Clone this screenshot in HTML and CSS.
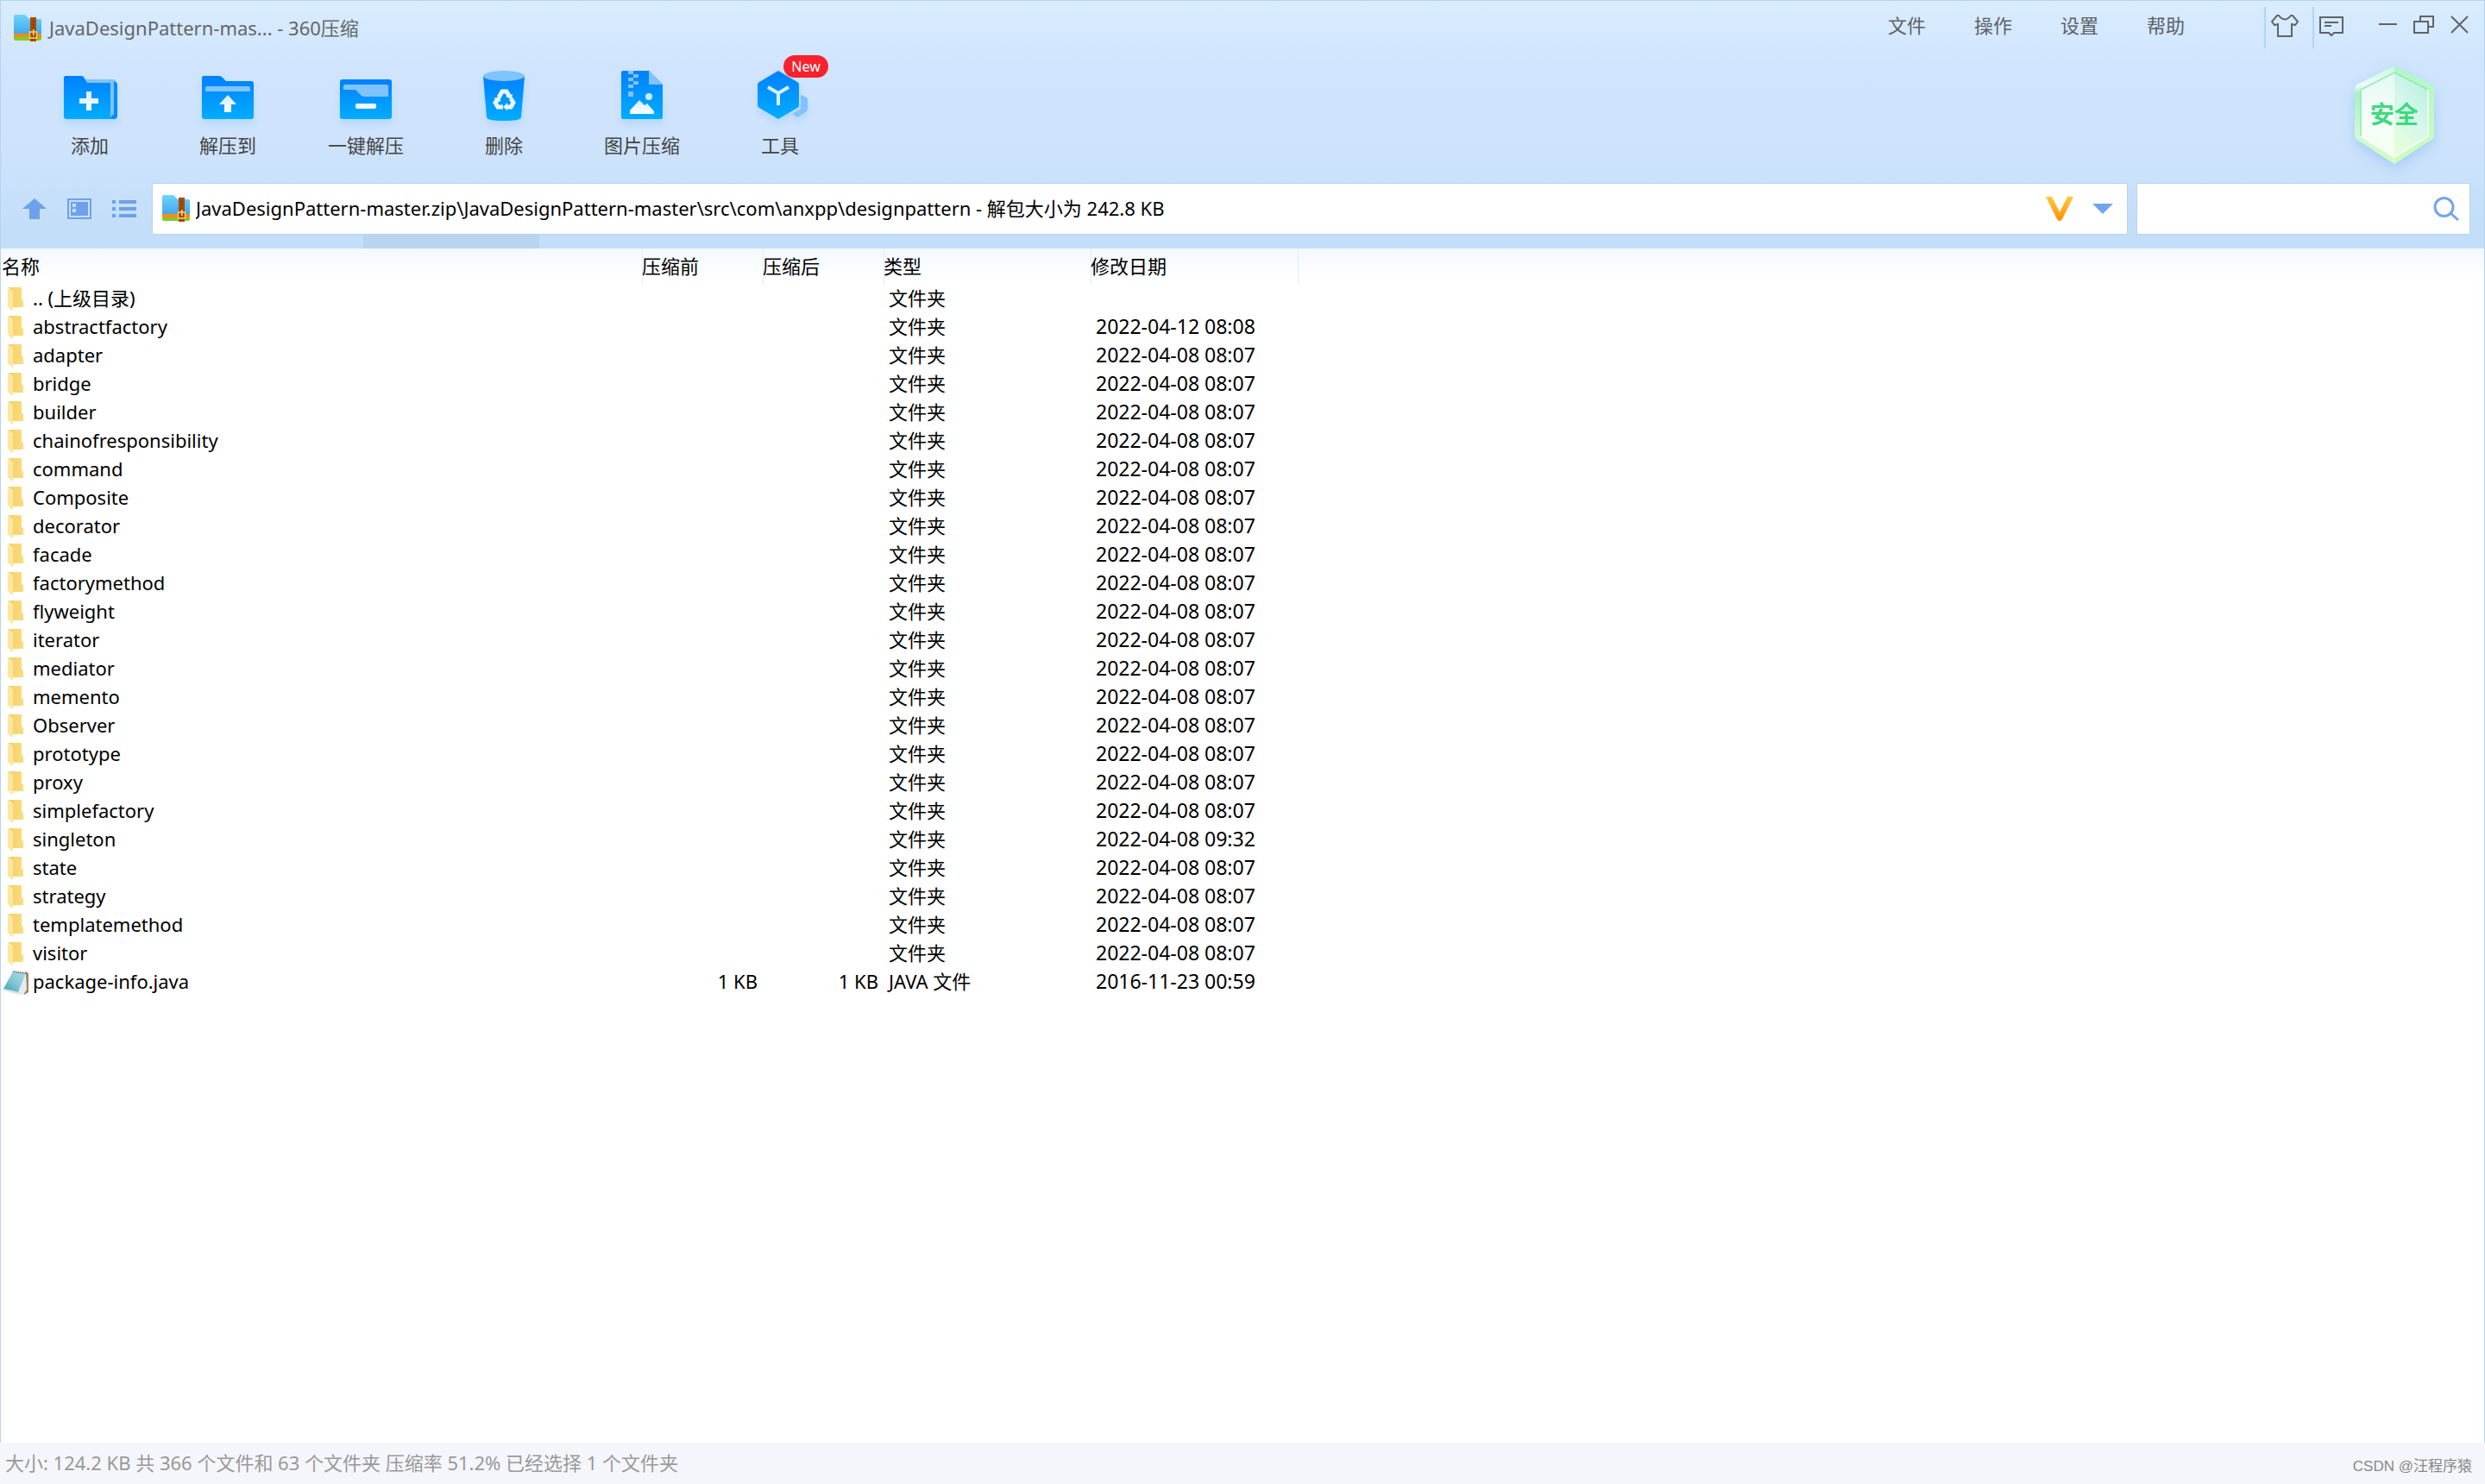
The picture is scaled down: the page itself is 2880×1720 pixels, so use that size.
FILE: index.html
```html
<!DOCTYPE html>
<html lang="zh-CN">
<head>
<meta charset="utf-8">
<title>JavaDesignPattern-mas... - 360压缩</title>
<link rel="stylesheet" href="styles.css">
</head>
<body>
<svg class="defs" aria-hidden="true">
  <defs>
    <linearGradient id="blue" x1="0" y1="0" x2="0" y2="1"><stop offset="0" stop-color="#0080ff"/><stop offset="1" stop-color="#00adff"/></linearGradient>
    <linearGradient id="sky" x1="0" y1="0" x2="0" y2="1"><stop offset="0" stop-color="#6fd3fb"/><stop offset="1" stop-color="#3da2ea"/></linearGradient>
    <linearGradient id="white" x1="0" y1="0" x2="0" y2="1"><stop offset="0" stop-color="#d3ecff"/><stop offset="1" stop-color="#ffffff"/></linearGradient>
    <linearGradient id="gold" x1="0" y1="0" x2="0" y2="1"><stop offset="0" stop-color="#ffc83d"/><stop offset="1" stop-color="#ff9000"/></linearGradient>
    <linearGradient id="page" x1="0" y1="0" x2="1" y2="0"><stop offset="0" stop-color="#f2d069"/><stop offset="1" stop-color="#fbdc7d"/></linearGradient>
    <linearGradient id="note" x1="1" y1="0" x2="0" y2="1"><stop offset="0" stop-color="#a9dbe3"/><stop offset="0.5" stop-color="#86c9d6"/><stop offset="1" stop-color="#3f9fb8"/></linearGradient>
    <linearGradient id="rimLeft" x1="0" y1="0" x2="0" y2="1"><stop offset="0" stop-color="#c4f7dc"/><stop offset="0.2" stop-color="#effdf8"/><stop offset="0.28" stop-color="#a9f0c4"/><stop offset="0.7" stop-color="#cdfbd3"/><stop offset="1" stop-color="#d0ffc0"/></linearGradient>
    <linearGradient id="rimRight" x1="0" y1="0" x2="0" y2="1"><stop offset="0" stop-color="#aef7ca"/><stop offset="1" stop-color="#ccffbc"/></linearGradient>
    <linearGradient id="coreLeft" x1="0" y1="0" x2="0" y2="1"><stop offset="0" stop-color="#e2f9f1"/><stop offset="0.5" stop-color="#f6fdfa"/><stop offset="1" stop-color="#f3fff0"/></linearGradient>
    <linearGradient id="coreRight" x1="0.8" y1="0" x2="0.3" y2="1"><stop offset="0" stop-color="#b5f0dc"/><stop offset="0.5" stop-color="#d6f7ec"/><stop offset="1" stop-color="#e3ffd8"/></linearGradient>
    <symbol id="archive" viewBox="0 0 32 32">
      <path d="M0 2q0-2 2-2h10q2 0 3 2l3 3h12q2 0 2 2v18H0z" fill="url(#sky)"/>
      <path d="M0 22h32v4H0z" fill="#ff8a12"/>
      <path d="M0 26h32v2q0 2-2 2H2q-2 0-2-2z" fill="#7fcb2d"/>
      <path d="M19 3h7v28h-7z" fill="#a64c05"/>
      <path d="M22 7h1v2h-1zM22 11h1v2h-1zM22 15h1v2h-1z" fill="#6b2c00"/>
      <path d="M18.500 20h8v7h-8z" fill="#a64c05" stroke="#ffd768" stroke-width="1.300"/>
      <path d="M22 17h1.500v7H22z" fill="#ffe08a"/>
    </symbol>
    <symbol id="folder" viewBox="0 0 20 28">
      <path d="M0 0h16v14l2 1v8H6V5z" fill="url(#page)"/>
      <path d="M0 1l6 4v21l-1 1-5-5z" fill="#ffe69b"/>
    </symbol>
  </defs>
</svg>
<div class="window">
  <header class="top">
    <div class="titlebar">
      <svg class="app-icon" aria-hidden="true"><use href="#archive"/></svg>
      <h1 class="title">JavaDesignPattern-mas... - 360压缩</h1>
      <nav class="menu">
        <button type="button">文件</button>
        <button type="button">操作</button>
        <button type="button">设置</button>
        <button type="button">帮助</button>
      </nav>
      <div class="extras">
        <button type="button" aria-label="皮肤"><svg width="32" height="28" viewBox="0 0 32 28" fill="none" stroke="#606468" stroke-width="2"><path d="M9 2q7 9 14 0l2 0 6 7-3 4-4-1v14H8V12l-4 1-3-4 6-7z"/></svg></button>
        <button type="button" aria-label="反馈"><svg width="28" height="26" viewBox="0 0 28 26" fill="none" stroke="#606468" stroke-width="2"><path d="M1 3h26v18H17l-3 3-3-3H1zM6 9h16M6 13h8"/></svg></button>
      </div>
      <div class="controls">
        <button type="button" aria-label="最小化"><svg width="24" height="24" viewBox="0 0 24 24" stroke="#606468" stroke-width="2"><path d="M2 12h21"/></svg></button>
        <button type="button" aria-label="还原"><svg width="24" height="24" viewBox="0 0 24 24" fill="none" stroke="#606468" stroke-width="2"><path d="M1 9h16v13H1zM8 8V3h15v12h-5"/></svg></button>
        <button type="button" aria-label="关闭"><svg width="24" height="24" viewBox="0 0 24 24" stroke="#606468" stroke-width="2"><path d="M2 3l19 19M21 3L2 22"/></svg></button>
      </div>
    </div>
    <div class="toolbar">
      <button type="button" class="tool"><svg viewBox="0 0 64 64" aria-hidden="true">
        <path d="M24 12h35q3 0 3 3v40H50z" fill="#80c3ff"/><path d="M60 14q4 1 4 4v36q0 4-4 4h-6l6-6z" fill="#008cff"/>
        <path d="M2 10q0-2 2-2h18q3 0 4 3l3 5h27v38q0 4 4 4H5q-3 0-3-3z" fill="url(#blue)"/>
        <path d="M28 26h6v8h8v6h-8v8h-6v-8h-8v-6h8z" fill="url(#white)"/></svg><span>添加</span></button>
      <button type="button" class="tool"><svg viewBox="0 0 64 64" aria-hidden="true">
        <path d="M2 10q0-2 2-2h18q3 0 5 3l3 3h29q3 0 3 3v38q0 3-3 3H5q-3 0-3-3z" fill="url(#blue)"/>
        <path d="M6 22q0-2 2-2h48q2 0 2 2v4H6z" fill="#80c3ff"/>
        <path d="M32 30l10 11h-6v9h-8v-9h-6z" fill="url(#white)"/></svg><span>解压到</span></button>
      <button type="button" class="tool"><svg viewBox="0 0 64 64" aria-hidden="true">
        <rect x="2" y="12" width="60" height="46" rx="3" fill="url(#blue)"/>
        <path d="M6 20q0-2 2-2h48q2 0 2 2v12H30q-3 0-5-3l-5-5H6z" fill="#80c3ff"/>
        <rect x="20" y="40" width="24" height="6" rx="2" fill="#eef8ff"/></svg><span>一键解压</span></button>
      <button type="button" class="tool"><svg viewBox="0 0 64 64" aria-hidden="true">
        <path d="M8 8h48l-4 48q-1 4-20 4t-20-4z" fill="url(#blue)"/>
        <ellipse cx="32" cy="8" rx="24" ry="6" fill="#80c3ff"/>
        <g fill="none" stroke="#eaf7ff" stroke-width="5"><path d="M26 33l4-7h5l3 5"/><path d="M40 34l3 5-3 5h-5"/><path d="M31 44h-6l-3-5 3-4"/></g>
        <path d="M34 32l8-3-1 6zM36 39v9l-5-4zM20 34l8-2v6z" fill="#eaf7ff"/></svg><span>删除</span></button>
      <button type="button" class="tool"><svg viewBox="0 0 64 64" aria-hidden="true">
        <path d="M8 4q0-2 2-2h30l16 16v38q0 2-2 2H10q-2 0-2-2z" fill="url(#blue)"/>
        <path d="M40 2l16 16H40z" fill="#80c3ff"/>
        <path d="M16 2h6v4h-6zM22 6h6v4h-6zM16 10h6v4h-6zM22 14h6v4h-6zM16 18h6v4h-6zM16 26h6v6h-6z" fill="#80c3ff"/>
        <circle cx="40" cy="32" r="4" fill="#c9ecff"/>
        <path d="M18 52v-4l11-12 6 6 3-2 8 9v3z" fill="url(#white)"/></svg><span>图片压缩</span></button>
      <button type="button" class="tool"><svg viewBox="0 0 64 64" aria-hidden="true">
        <path d="M56 30q2 0 8 4v12q0 3-4 5l-8 5-6-4 10-6z" fill="#80c3ff"/>
        <path d="M30 2l22 13q2 1 2 3v24q0 2-2 3L30 58 8 45q-2-1-2-3V18q0-2 2-3z" fill="url(#blue)"/>
        <path d="M18 21l12 7 12-7M30 28v14" fill="none" stroke="#d9f0ff" stroke-width="4"/></svg><span>工具</span><em class="badge">New</em></button>
      <button type="button" class="safe">
        <svg viewBox="0 0 92 114" aria-hidden="true">
          <path d="M46 0v114L3 86q-3-2-3-6V28q0-4 3-6z" fill="url(#rimLeft)"/>
          <path d="M46 0v114l43-28q3-2 3-6V28q0-4-3-6z" fill="url(#rimRight)"/>
          <path d="M46 8v98L7 82V28z" fill="url(#coreLeft)"/>
          <path d="M46 8v98l39-24V28z" fill="url(#coreRight)"/>
          <path d="M7 82V28L46 8l39 20" fill="none" stroke="#93e8b4" stroke-width="1.500"/>
          <path d="M7 82l39 24 39-24V28" fill="none" stroke="#ffffff" stroke-width="1.500"/>
        </svg>
        <span>安全</span>
      </button>
    </div>
    <div class="navbar">
      <div class="views">
        <button type="button" aria-label="向上"><svg width="28" height="24" viewBox="0 0 28 24" fill="#6ea1ea"><path d="M14 0l14 12h-8v12H8V12H0z"/></svg></button>
        <button type="button" aria-label="预览视图"><svg width="28" height="24" viewBox="0 0 28 24"><path d="M1 1h26v22H1z" fill="none" stroke="#6ea1ea" stroke-width="2"/><path d="M4 4h20v16H4z" fill="#6ea1ea"/><path d="M6 6h4v4H6zM6 12h4v4H6z" fill="#c6e0fa"/></svg></button>
        <button type="button" aria-label="列表视图"><svg width="28" height="20" viewBox="0 0 28 20" fill="#6ea1ea"><path d="M0 0h4v4H0zM8 0h20v4H8zM0 8h4v4H0zM8 8h20v4H8zM0 16h4v4H0zM8 16h20v4H8z"/></svg></button>
      </div>
      <div class="address">
        <svg class="app-icon" aria-hidden="true"><use href="#archive"/></svg>
        <input type="text" aria-label="地址" value="JavaDesignPattern-master.zip\JavaDesignPattern-master\src\com\anxpp\designpattern - 解包大小为 242.8 KB">
        <button type="button" aria-label="会员"><svg width="32" height="28" viewBox="0 0 32 28"><path d="M0 0h7l9 18 9-18h7L19 26q-3 4-6 0z" fill="url(#gold)"/></svg></button>
        <button type="button" aria-label="历史地址"><svg width="24" height="12" viewBox="0 0 24 12"><path d="M0 0h24L12 12z" fill="#74a5ec"/></svg></button>
      </div>
      <div class="search">
        <input type="text" aria-label="搜索">
        <button type="button" aria-label="搜索"><svg width="30" height="28" viewBox="0 0 30 28" fill="none" stroke="#74a5ec" stroke-width="3"><circle cx="12.500" cy="12" r="10.500"/><path d="M20 19l9 8"/></svg></button>
      </div>
    </div>
  </header>
  <main class="files">
    <table>
      <colgroup><col class="c-name"><col class="c-size"><col class="c-size"><col class="c-type"><col class="c-date"><col></colgroup>
      <thead><tr><th>名称</th><th>压缩前</th><th>压缩后</th><th>类型</th><th>修改日期</th><th></th></tr></thead>
      <tbody id="rows"></tbody>
    </table>
  </main>
  <footer class="status">
    <span>大小: 124.2 KB 共 366 个文件和 63 个文件夹 压缩率 51.2% 已经选择 1 个文件夹</span>
    <span class="credit">CSDN @汪程序猿</span>
  </footer>
</div>
<script src="script.js"></script>
</body>
</html>
```

FILE: styles.css
```css
* { box-sizing: border-box; }
body {
  margin: 0;
  font: 22px/32px "Noto Sans", "Noto Sans CJK SC", sans-serif;
  color: #000;
}
button, input {
  font: inherit;
  color: inherit;
  background: none;
  border: 0;
  padding: 0;
  margin: 0;
  outline: 0;
}
svg { display: block; flex: none; }
.defs { position: absolute; width: 0; height: 0; }
.window {
  min-height: 100vh;
  display: flex;
  flex-direction: column;
  background: #fff;
}
.top {
  border: 1px solid #b6d3f0;
  border-bottom: 0;
  background: linear-gradient(#d9ecff, #d0e5fd 26%, #cfe4fc 55%, #c3def9 92%, #c3def9);
}
.titlebar {
  display: flex;
  height: 63px;
  padding: 7px 8px 0 15px;
}
.app-icon { width: 32px; height: 32px; }
.titlebar .app-icon { margin-top: 9px; }
.title {
  flex: 1;
  margin: 8px 0 0 9px;
  font-size: 22px;
  font-weight: 400;
  color: #666;
}
.menu { display: flex; margin-right: 64px; color: #5c6064; }
.menu button { width: 100px; height: 42px; }
.extras { display: flex; }
.extras button {
  width: 56px;
  height: 48px;
  padding: 8px 6px 12px;
  border-left: 2px solid #b6d3f0;
}
.controls { display: flex; gap: 18px; padding: 8px 8px 0 19px; }
.controls button { width: 24px; height: 24px; }
.toolbar {
  position: relative;
  display: flex;
  height: 148px;
  padding-left: 23px;
}
.tool {
  position: relative;
  width: 160px;
  display: flex;
  flex-direction: column;
  align-items: center;
  padding-top: 16px;
  gap: 8px;
  color: #444;
}
.tool svg { width: 64px; height: 64px; filter: drop-shadow(0 6px 5px #8fc3fa66); }
.badge {
  position: absolute;
  left: 84px;
  top: 0;
  width: 52px;
  height: 26px;
  border-radius: 13px;
  background: #f7222d;
  color: #fff;
  font: 16px/26px "Noto Sans", sans-serif;
}
.safe {
  position: relative;
  width: 92px;
  height: 114px;
  margin: 12px 58px 0 auto;
  filter: drop-shadow(0 6px 8px #8fbdf499);
}
.safe span {
  position: absolute;
  inset: 40px 0 auto;
  font-size: 28px;
  font-weight: 700;
  color: #3fd97f;
}
.navbar {
  display: flex;
  gap: 10px;
  height: 76px;
  padding: 0 16px 16px 25px;
  background: linear-gradient(#bad4ee, #bad4ee) 420px 100% / 204px 16px no-repeat;
}
.views { display: flex; align-items: center; gap: 24px; width: 140px; }
.address, .search {
  display: flex;
  align-items: center;
  background: #fff;
  border: 1px solid #b6d3f0;
}
.address { flex: 1; padding: 0 16px 0 11px; }
.address input { flex: 1; margin-left: 7px; min-width: 0; padding-bottom: 2px; }
.address button + button { margin-left: 22px; }
.search { width: 387px; padding: 0 12px; }
.search input { flex: 1; min-width: 0; }
.files { flex: 1; border: 1px solid #b6d3f0; border-width: 0 1px; }
table { width: 100%; table-layout: fixed; border-collapse: collapse; }
.c-name { width: 743px; }
.c-size { width: 140px; }
.c-type, .c-date { width: 240px; }
th {
  height: 42px;
  padding: 0 0 3px;
  font-weight: 400;
  text-align: left;
  background: linear-gradient(#f3f9ff, #fff 90%);
  box-shadow: inset 1px 0 #dceefd;
}
th:first-child { padding-left: 1px; box-shadow: none; }
td { height: 33px; padding: 0 6px 3px; line-height: 30px; white-space: nowrap; }
td:nth-child(2), td:nth-child(3) { text-align: right; }
td:nth-child(5) { font-size: 23px; }
td:first-child { padding: 0; }
.entry { display: flex; align-items: flex-start; height: 33px; padding-left: 2px; gap: 5px; }
.file-icon { width: 30px; height: 28px; margin-top: 3px; }
.status {
  display: flex;
  justify-content: space-between;
  height: 48px;
  padding: 7px 15px 0 6px;
  background: #f4f6fb;
  color: #999;
}
.credit {
  padding-top: 5px;
  font: 17px/32px "Liberation Sans", "Noto Sans CJK SC", sans-serif;
  color: #888;
}
```

FILE: script.js
```js
const rows = [
  [".. (上级目录)", ""], ["abstractfactory", "2022-04-12 08:08"], ["adapter"], ["bridge"], ["builder"],
  ["chainofresponsibility"], ["command"], ["Composite"], ["decorator"], ["facade"], ["factorymethod"],
  ["flyweight"], ["iterator"], ["mediator"], ["memento"], ["Observer"], ["prototype"], ["proxy"],
  ["simplefactory"], ["singleton", "2022-04-08 09:32"], ["state"], ["strategy"], ["templatemethod"], ["visitor"],
  ["package-info.java", "2016-11-23 00:59", "1 KB", "1 KB", "JAVA 文件"]
];
const folderIcon = '<svg class="file-icon" viewBox="0 0 30 28" aria-hidden="true"><use href="#folder" x="6" y="0" width="20" height="28"/></svg>';
const noteIcon = '<svg class="file-icon" viewBox="0 0 30 28" aria-hidden="true"><path d="M26 1l4 2v22l-5 3z" fill="#9b8560"/><path d="M27 2l1 20-4 6-8-3z" fill="#e6ecee"/><path d="M12 1l15 2-9 22-17-4z" fill="url(#note)"/><path d="M1 21l17 4 6 3-8-1-15-4z" fill="#d3e4e8"/><path d="M12 1l15 2" stroke="#667" stroke-width="2" stroke-dasharray="1 1"/></svg>';
document.getElementById("rows").innerHTML = rows.map(
  ([name, date = "2022-04-08 08:07", before = "", after = "", type = "文件夹"]) =>
    `<tr><td><span class="entry">${before ? noteIcon : folderIcon}${name}</span></td><td>${before}</td><td>${after}</td><td>${type}</td><td>${date}</td><td></td></tr>`
).join("");
```
